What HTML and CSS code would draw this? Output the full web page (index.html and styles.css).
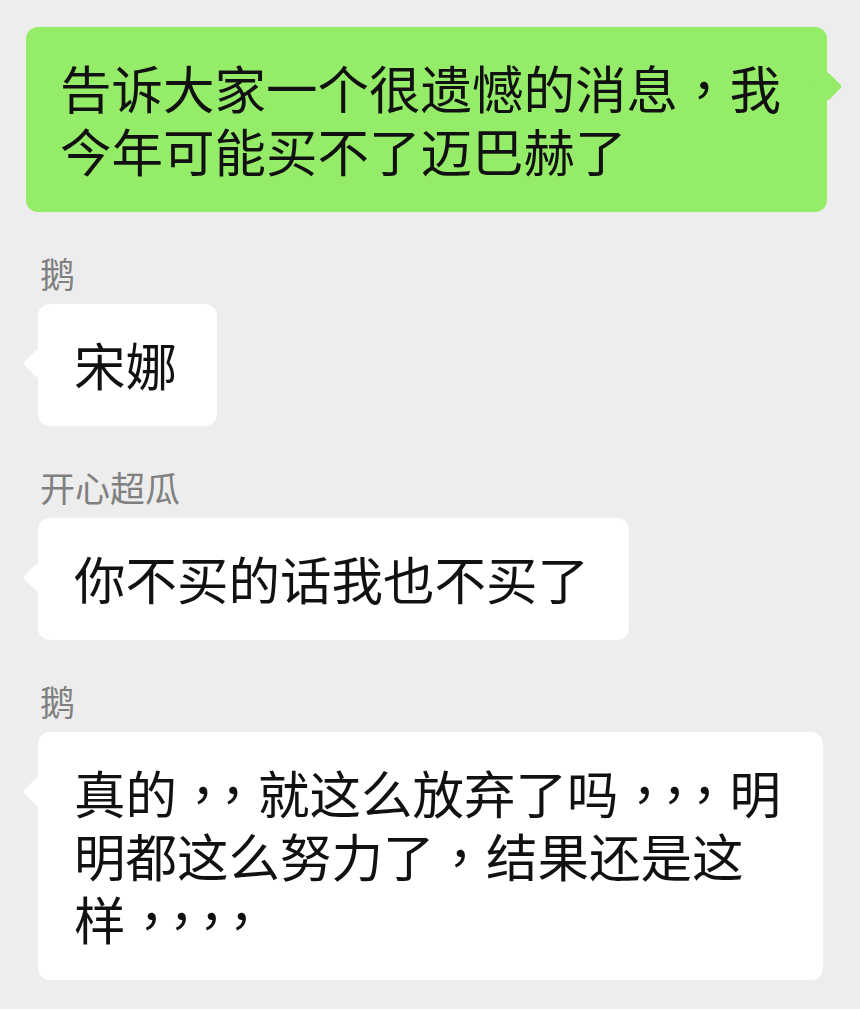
FILE: index.html
```html
<!DOCTYPE html>
<html lang="zh-CN">
<head>
  <meta charset="UTF-8">
  <meta name="viewport" content="width=device-width, initial-scale=1">
  <title>聊天</title>
  <link rel="stylesheet" href="styles.css">
</head>
<body>
  <div class="chat">
    <!-- 自己发的消息 -->
    <div class="msg mine">
      <div class="bubble">告诉大家一个很遗憾的消息<span class="p" lang="zh-TW">，</span>我今年可能买不了迈巴赫了</div>
    </div>

    <div class="msg">
      <div class="name">鹅</div>
      <div class="bubble">宋娜</div>
    </div>

    <div class="msg">
      <div class="name">开心超瓜</div>
      <div class="bubble">你不买的话我也不买了</div>
    </div>

    <div class="msg">
      <div class="name">鹅</div>
      <div class="bubble">真的<span class="p pp" lang="zh-TW">，，</span>就这么放弃了吗<span class="p pp" lang="zh-TW">，，，</span>明明都这么努力了<span class="p" lang="zh-TW">，</span>结果还是这样<span class="p pp" lang="zh-TW">，，，，</span></div>
    </div>
  </div>
</body>
</html>
```

FILE: styles.css
```css
body {
  margin: 0;
  background-color: #ededed;
  font-family: "Noto Sans CJK SC", "Noto Sans", sans-serif;
}
.chat {
  display: flex;
  flex-direction: column;
  padding: 27px 0 0;
}
.msg {
  display: flex;
  flex-direction: column;
  align-items: flex-start;
  padding-left: 38px;
  margin-top: 43px;
}
.msg.mine {
  align-items: flex-end;
  padding-left: 0;
  padding-right: 33px;
  margin-top: 0;
}
.name {
  font-size: 35px;
  line-height: 36px;
  color: #808080;
  padding-left: 2px;
  margin-bottom: 13px;
}
.bubble {
  position: relative;
  max-width: 785px;
  box-sizing: border-box;
  padding: 28px 40px 31px 36px;
  background-color: #fff;
  border-radius: 12px;
  font-size: 51.5px;
  line-height: 63px;
  color: #111;
}
/* 逗号居中显示 */
.bubble .p {
  font-family: "Noto Sans CJK TC", "Noto Sans CJK SC", sans-serif;
  text-spacing-trim: space-all;
}
/* 连续的逗号挤紧一点，最后一个留出空隙 */
.bubble .pp {
  letter-spacing: -21.5px;
  margin-right: 21px;
}
.bubble::before {
  content: "";
  position: absolute;
  top: 49px;
  left: -11px;
  width: 21px;
  height: 21px;
  border-radius: 3px;
  background-color: inherit;
  transform: rotate(45deg);
}
.mine .bubble {
  max-width: 801px;
  padding-left: 34px;
  background-color: #95ec69;
}
.mine .bubble::before {
  left: auto;
  right: -11px;
}
```
